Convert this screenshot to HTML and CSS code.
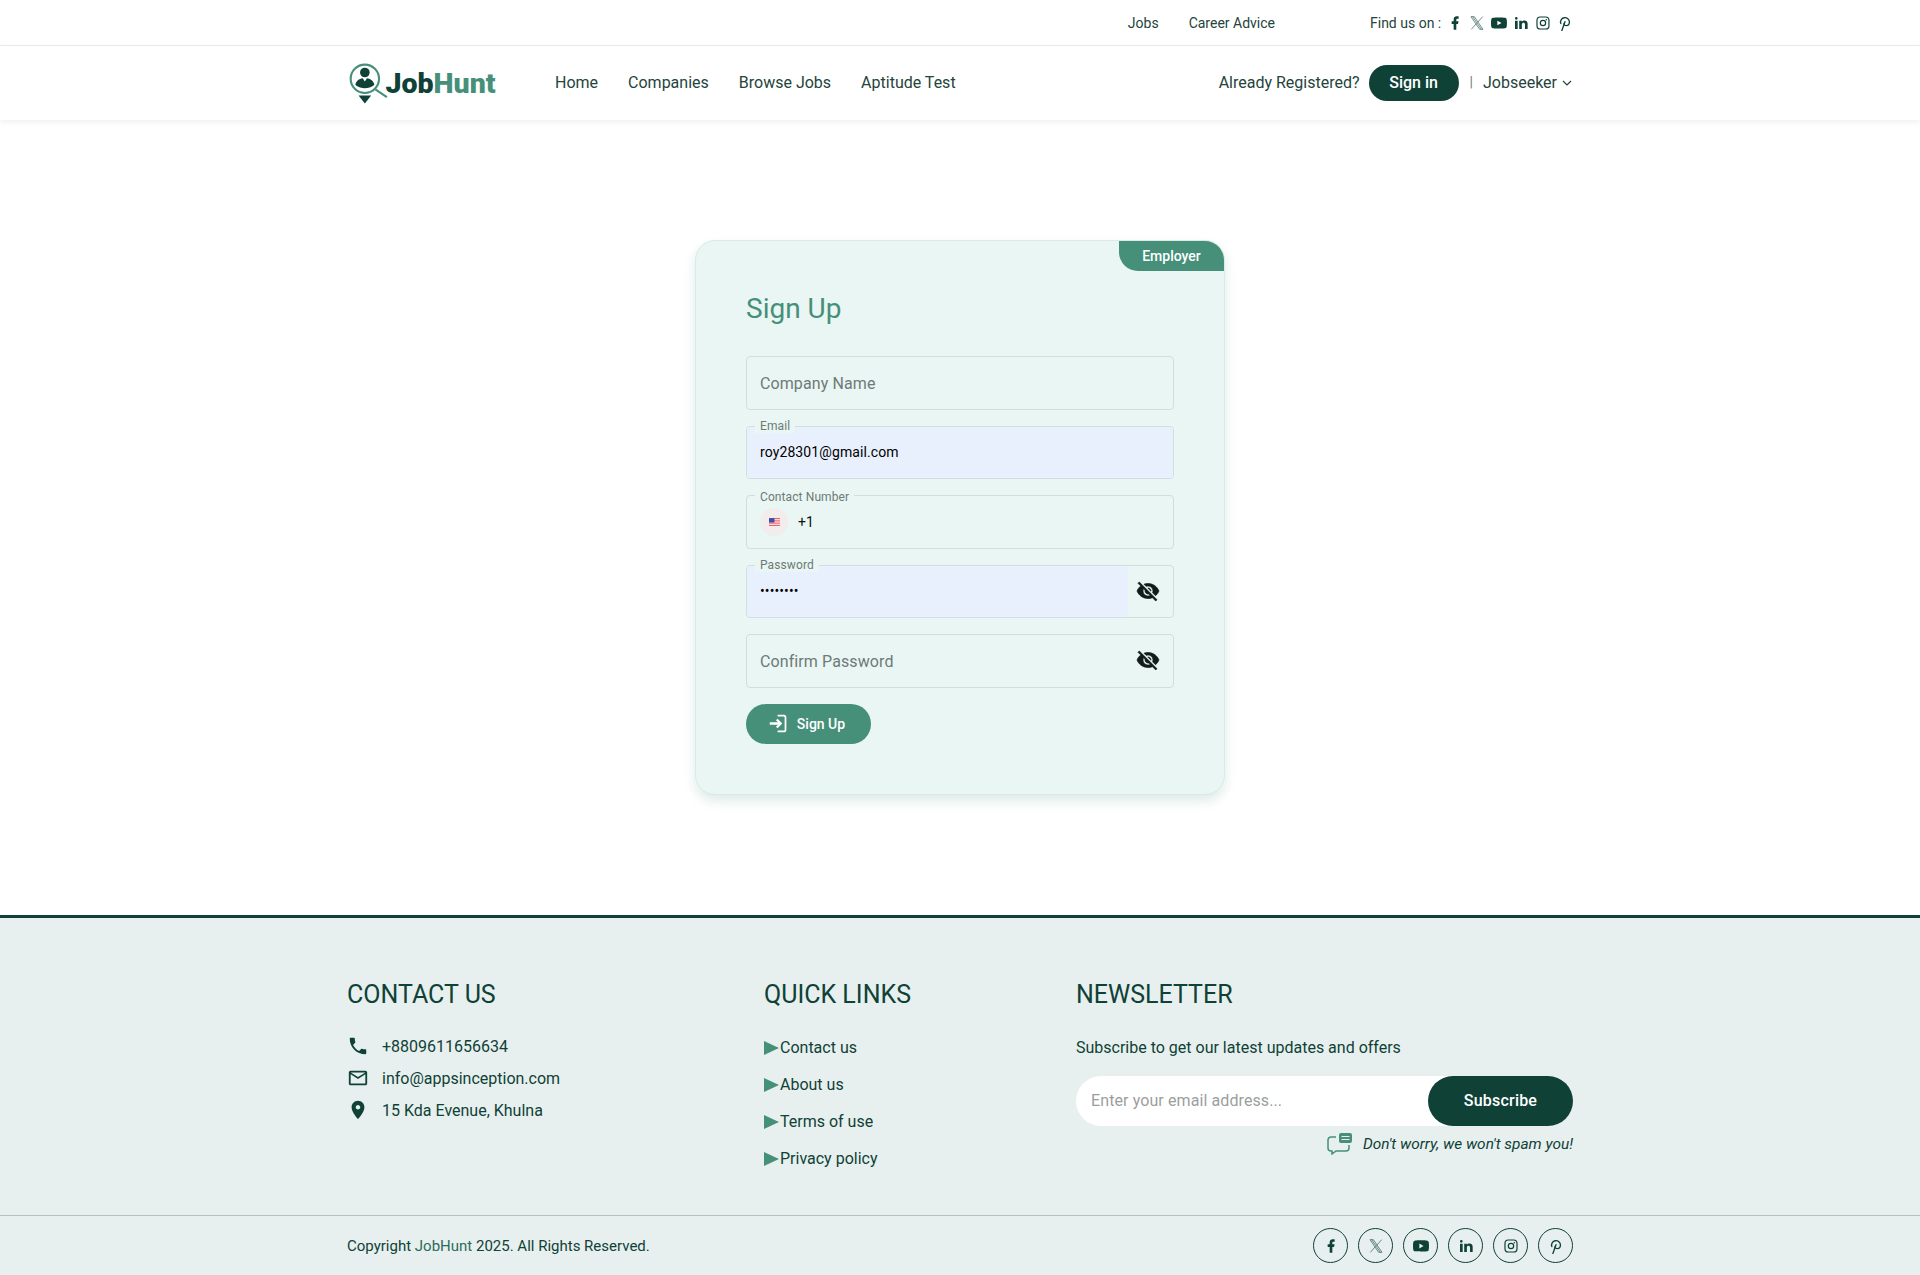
FILE: index.html
```html
<!DOCTYPE html>
<html lang="en">

<head>
    <meta charset="UTF-8">
    <title>JobHunt - Sign Up</title>
    <link rel="stylesheet" href="styles.css">
</head>

<body>
    <svg class="icon-defs" width="0" height="0">
        <symbol id="i-fb" viewBox="0 0 24 24"><path fill="currentColor" d="M14 13.5h2.5l1-4H14v-2c0-1.03 0-2 2-2h1.5V2.14c-.326-.043-1.557-.14-2.857-.14C11.928 2 10 3.657 10 6.7v2.8H7v4h3V22h4v-8.5z"/></symbol>
        <symbol id="i-x" viewBox="0 0 24 24"><g fill="none" stroke="currentColor" stroke-width="1.1"><path d="M3 2.500h5l13 19h-5z"/><path d="M5.500 2.500l13 19"/><path d="M20.500 2.500l-7.800 8.800M3.500 21.500l7.800-8.800"/></g></symbol>
        <symbol id="i-yt" viewBox="0 0 24 24"><path fill="currentColor" d="M23.498 6.186a3.016 3.016 0 0 0-2.122-2.136C19.505 3.545 12 3.545 12 3.545s-7.505 0-9.377.505A3.017 3.017 0 0 0 .502 6.186C0 8.07 0 12 0 12s0 3.93.502 5.814a3.016 3.016 0 0 0 2.122 2.136c1.871.505 9.376.505 9.376.505s7.505 0 9.377-.505a3.015 3.015 0 0 0 2.122-2.136C24 15.93 24 12 24 12s0-3.93-.502-5.814zM9.545 15.568V8.432L15.818 12l-6.273 3.568z"/></symbol>
        <symbol id="i-in" viewBox="0 0 24 24"><path fill="currentColor" d="M6.94 5a2 2 0 1 1-4-.002 2 2 0 0 1 4 .002zM7 8.48H3V21h4V8.48zm6.32 0H9.34V21h3.94v-6.57c0-3.66 4.77-4 4.77 0V21H22v-7.93c0-6.17-7.06-5.94-8.72-2.91l.04-1.68z"/></symbol>
        <symbol id="i-ig" viewBox="0 0 24 24"><g fill="none" stroke="currentColor" stroke-width="1.800"><rect x="3" y="3" width="18" height="18" rx="5"/><circle cx="12" cy="12" r="4"/></g><circle cx="17" cy="7" r="1.100" fill="currentColor"/></symbol>
        <symbol id="i-pin" viewBox="4.500 4 15 18"><g fill="none" stroke="currentColor" stroke-width="1.500" stroke-linecap="round" stroke-linejoin="round"><path d="M8.500 21.500l3.500-10"/><path d="M10.700 14c.437 1.263 1.430 2 2.550 2c2.071 0 3.750-1.554 3.750-4a5 5 0 1 0-9.700 1.700"/></g></symbol>
        <symbol id="i-eye-off" viewBox="0 0 24 24"><path fill="currentColor" stroke="currentColor" stroke-width=".7" d="M12 7c2.760 0 5 2.240 5 5 0 .65-.13 1.260-.36 1.830l2.920 2.920c1.510-1.260 2.700-2.890 3.430-4.750-1.730-4.390-6-7.500-11-7.500-1.400 0-2.740.25-3.980.7l2.160 2.160C10.740 7.130 11.350 7 12 7zM2 4.270l2.280 2.280.46.46C3.080 8.300 1.780 10.020 1 12c1.730 4.390 6 7.500 11 7.500 1.550 0 3.030-.3 4.380-.84l.42.42L19.730 22 21 20.730 3.270 3 2 4.270zM7.530 9.800l1.550 1.550c-.05.21-.08.43-.08.65 0 1.660 1.340 3 3 3 .22 0 .44-.03.65-.08l1.550 1.550c-.67.33-1.410.53-2.200.53-2.760 0-5-2.240-5-5 0-.79.2-1.530.53-2.200zm4.310-.78l3.150 3.150.02-.16c0-1.660-1.340-3-3-3l-.17.01z"/></symbol>
    </svg>

    <div class="top-bar">
        <div class="wrap top-bar-inner">
            <a href="#" class="top-link">Jobs</a>
            <a href="#" class="top-link">Career Advice</a>
            <div class="find-us">
                <span class="find-label">Find us on :</span>
                <svg class="find-icon"><use href="#i-fb"/></svg>
                <svg class="find-icon thin"><use href="#i-x"/></svg>
                <svg class="find-icon"><use href="#i-yt"/></svg>
                <svg class="find-icon"><use href="#i-in"/></svg>
                <svg class="find-icon"><use href="#i-ig"/></svg>
                <svg class="find-icon"><use href="#i-pin"/></svg>
            </div>
        </div>
    </div>

    <header class="nav-bar">
        <div class="wrap nav-inner">
            <a href="#" class="logo">
                <svg class="logo-mark" viewBox="0 0 40 40">
                    <circle cx="17" cy="16" r="13.500" fill="none" stroke="#46907a" stroke-width="2"/>
                    <path d="M27 26l11 7.500" stroke="#46907a" stroke-width="2"/>
                    <circle cx="17" cy="10" r="4.600" fill="#0f4137"/>
                    <path d="M8 22c.5-4 3.500-6 7-6.500l2 3 2-3c3.500.5 6.500 2.500 7 6.500-3 2.500-6 3-9 3s-6-.5-9-3z" fill="#0f4137"/>
                    <path d="M11 32h12l-6 7.500z" fill="#0f4137"/>
                </svg>
                <span class="logo-text">Job<span class="logo-accent">Hunt</span></span>
            </a>
            <nav class="main-nav">
                <a href="#">Home</a>
                <a href="#">Companies</a>
                <a href="#">Browse Jobs</a>
                <a href="#">Aptitude Test</a>
            </nav>
            <div class="nav-right">
                <span>Already Registered?</span>
                <a href="#" class="signin-btn">Sign in</a>
                <span class="nav-sep">|</span>
                <span>Jobseeker</span>
                <svg class="chevron" viewBox="0 0 12 12"><path d="M2 4l4 4 4-4" fill="none" stroke="currentColor" stroke-width="1.200"/></svg>
            </div>
        </div>
    </header>

    <main class="page-main">
        <div class="signup-card">
            <span class="role-tab">Employer</span>
            <h1 class="signup-title">Sign Up</h1>

            <div class="field">
                <input type="text" placeholder="Company Name">
            </div>
            <div class="field is-filled">
                <label>Email</label>
                <input type="text" class="autofilled" value="roy28301@gmail.com">
            </div>
            <div class="field is-filled">
                <label class="label-low">Contact Number</label>
                <div class="phone-row">
                    <span class="flag-wrap">
                        <svg class="flag" viewBox="0 0 10 7">
                            <rect width="10" height="7" fill="#e8505b"/>
                            <rect y="1" width="10" height="1" fill="#fff"/>
                            <rect y="3" width="10" height="1" fill="#fff"/>
                            <rect y="5" width="10" height="1" fill="#fff"/>
                            <rect width="5" height="4" fill="#3d4fa8"/>
                        </svg>
                    </span>
                    <span>+1</span>
                </div>
            </div>
            <div class="field is-filled">
                <label>Password</label>
                <input type="password" class="autofilled" value="password">
                <svg class="eye"><use href="#i-eye-off"/></svg>
            </div>
            <div class="field">
                <input type="password" placeholder="Confirm Password">
                <svg class="eye"><use href="#i-eye-off"/></svg>
            </div>

            <button class="signup-btn">
                <svg viewBox="0 0 24 24" width="21" height="21">
                    <g fill="none" stroke="currentColor">
                        <path stroke-width="2" d="M11 3h7a2 2 0 0 1 2 2v14a2 2 0 0 1-2 2h-7"/>
                        <path stroke-width="2.600" d="M2 12h11M10 7.500l4.500 4.500-4.500 4.500"/>
                    </g>
                </svg>
                Sign Up
            </button>
        </div>
    </main>

    <footer class="site-footer">
        <div class="wrap footer-grid">
            <section>
                <h3>CONTACT US</h3>
                <ul class="contact-list">
                    <li>
                        <svg viewBox="0 0 24 24"><path fill="currentColor" d="M6.620 10.790c1.440 2.830 3.760 5.140 6.590 6.590l2.200-2.200c.27-.27.67-.36 1.020-.24 1.120.37 2.330.57 3.570.57.55 0 1 .45 1 1V20c0 .55-.45 1-1 1-9.390 0-17-7.610-17-17 0-.55.45-1 1-1h3.500c.55 0 1 .45 1 1 0 1.250.2 2.450.57 3.570.11.35.03.74-.25 1.020l-2.200 2.200z"/></svg>
                        +8809611656634
                    </li>
                    <li>
                        <svg viewBox="0 0 24 24"><path fill="currentColor" d="M22 6c0-1.100-.9-2-2-2H4c-1.100 0-2 .9-2 2v12c0 1.100.9 2 2 2h16c1.100 0 2-.9 2-2V6zm-2 0l-8 5-8-5h16zm0 12H4V8l8 5 8-5v10z"/></svg>
                        info@appsinception.com
                    </li>
                    <li>
                        <svg viewBox="0 0 24 24"><path fill="currentColor" d="M12 2C8.130 2 5 5.130 5 9c0 5.250 7 13 7 13s7-7.750 7-13c0-3.870-3.130-7-7-7zm0 9.500c-1.380 0-2.500-1.120-2.500-2.500s1.120-2.500 2.500-2.500 2.500 1.120 2.500 2.500-1.120 2.500-2.500 2.500z"/></svg>
                        15 Kda Evenue, Khulna
                    </li>
                </ul>
            </section>
            <section>
                <h3>QUICK LINKS</h3>
                <ul class="quick-list">
                    <li><a href="#">Contact us</a></li>
                    <li><a href="#">About us</a></li>
                    <li><a href="#">Terms of use</a></li>
                    <li><a href="#">Privacy policy</a></li>
                </ul>
            </section>
            <section>
                <h3>NEWSLETTER</h3>
                <p class="news-text">Subscribe to get our latest updates and offers</p>
                <form class="news-form">
                    <input type="text" placeholder="Enter your email address...">
                    <button type="button">Subscribe</button>
                </form>
                <p class="news-note">
                    <svg viewBox="0 0 26 22" width="26" height="22">
                        <path d="M9 4H4a3 3 0 0 0-3 3v8a3 3 0 0 0 3 3h1v3l4-3h10a3 3 0 0 0 3-3v-3" fill="none" stroke="#46907a" stroke-width="1.500"/>
                        <rect x="12" y="0" width="13" height="10" rx="2" fill="#46907a"/>
                        <path d="M14.500 3.500h8M14.500 6.500h8" stroke="#e7f0ee" stroke-width="1.200"/>
                    </svg>
                    <em>Don't worry, we won't spam you!</em>
                </p>
            </section>
        </div>
        <div class="footer-bottom">
            <div class="wrap footer-bottom-inner">
                <span>Copyright <a href="#">JobHunt</a> 2025. All Rights Reserved.</span>
                <div class="social-row">
                    <a href="#"><svg><use href="#i-fb"/></svg></a>
                    <a href="#"><svg class="thin"><use href="#i-x"/></svg></a>
                    <a href="#"><svg><use href="#i-yt"/></svg></a>
                    <a href="#"><svg><use href="#i-in"/></svg></a>
                    <a href="#"><svg><use href="#i-ig"/></svg></a>
                    <a href="#"><svg><use href="#i-pin"/></svg></a>
                </div>
            </div>
        </div>
    </footer>
</body>

</html>
```

FILE: styles.css
```css
* {
    box-sizing: border-box;
}

body {
    font-family: Roboto, "Liberation Sans", sans-serif;
    background-color: #fff;
    color: #0f4137;
    margin: 0;
    font-size: 16px;
}

a {
    color: inherit;
    text-decoration: none;
}

.icon-defs {
    position: absolute;
}

.wrap {
    width: 1226px;
    margin: 0 auto;
}

/* top bar */
.top-bar {
    height: 46px;
    border-bottom: 1px solid #e9eeed;
    font-size: 14px;
    color: #24443c;
}

.top-bar-inner {
    height: 45px;
    display: flex;
    align-items: center;
    justify-content: flex-end;
}

.top-link {
    margin-right: 30px;
}

.find-us {
    display: flex;
    align-items: center;
    margin-left: 65px;
    width: 203px;
}

.find-label {
    white-space: nowrap;
}

.find-icon {
    width: 16px;
    height: 16px;
    color: #0f4137;
    margin-left: 6px;
}

.thin {
    opacity: 0.8;
}

/* nav */
.nav-bar {
    height: 74px;
    box-shadow: 0 2px 6px rgba(15, 65, 55, 0.08);
}

.nav-inner {
    height: 74px;
    display: flex;
    align-items: center;
}

.logo {
    display: flex;
    align-items: center;
    margin-left: 0;
    width: 208px;
}

.logo-mark {
    width: 42px;
    height: 42px;
    flex: none;
}

.logo-text {
    font-size: 28.500px;
    font-weight: 900;
    margin-left: -3.500px;
}

.logo-accent {
    color: #46907a;
}

.main-nav {
    display: flex;
    gap: 30px;
    color: #24443c;
    padding-bottom: 2px;
}

.nav-right {
    margin-left: auto;
    display: flex;
    align-items: center;
    color: #24443c;
}

.nav-right span {
    padding-bottom: 2px;
}

.signin-btn {
    background-color: #0f4137;
    color: #fff;
    font-weight: 500;
    height: 36px;
    width: 90px;
    border-radius: 18px;
    display: flex;
    align-items: center;
    justify-content: center;
    margin-left: 9px;
    padding-bottom: 2px;
}

.nav-sep {
    margin: 0 10px 0 11px;
    font-size: 14px;
    color: #6d8179;
}

.chevron {
    width: 12px;
    height: 12px;
    margin-left: 4px;
}

/* sign up card */
.page-main {
    padding: 120px 0;
}

.signup-card {
    position: relative;
    width: 530px;
    height: 555px;
    margin: 0 auto;
    padding: 50px;
    background-color: #e9f6f3;
    border: 1px solid #d9ebe6;
    border-radius: 20px;
    box-shadow: 0 6px 12px rgba(70, 144, 122, 0.18);
}

.role-tab {
    position: absolute;
    top: 0;
    right: 0;
    width: 105px;
    height: 30px;
    background-color: #46907a;
    color: #fff;
    font-size: 14px;
    font-weight: 500;
    display: flex;
    align-items: center;
    justify-content: center;
    border-radius: 0 19px 0 19px;
}

.signup-title {
    margin: 1px 0 30px;
    font-size: 28px;
    line-height: 34px;
    font-weight: 400;
    color: #46907a;
}

.field {
    position: relative;
    height: 53.5px;
    margin-bottom: 16px;
    border: 1px solid #d2dedb;
    border-radius: 4px;
    overflow: visible;
}

.field input {
    display: block;
    width: 100%;
    height: 100%;
    padding: 1px 13px 0;
    border: 0;
    outline: 0;
    background: transparent;
    font-family: inherit;
    font-size: 16px;
    letter-spacing: 0.1px;
    color: #000;
    border-radius: 3px;
}

.field input::placeholder {
    color: #6d7a77;
    opacity: 1;
}

.field.is-filled input {
    font-size: 14px;
    padding-top: 0;
}

.field input.autofilled {
    background-color: #e8f0fe;
}

.field input[type="password"] {
    width: calc(100% - 45px);
    border-radius: 3px 0 0 3px;
}

.field label {
    position: absolute;
    top: -8px;
    left: 8px;
    padding: 0 5px;
    font-size: 12px;
    line-height: 14px;
    letter-spacing: 0.1px;
    color: #6d7a77;
    background-color: #e9f6f3;
}

.field label.label-low {
    top: -6px;
}

.phone-row {
    height: 100%;
    padding-left: 13px;
    display: flex;
    align-items: center;
    font-size: 14px;
    color: #111;
}

.flag-wrap {
    width: 28px;
    height: 28px;
    border-radius: 50%;
    background-color: #f3ecec;
    display: flex;
    align-items: center;
    justify-content: center;
    margin-right: 10px;
}

.flag {
    width: 11px;
    height: 8px;
}

.eye {
    position: absolute;
    right: 13px;
    top: 13px;
    width: 24px;
    height: 24px;
    color: #111b18;
}

.signup-btn {
    width: 125px;
    height: 40px;
    border: 0;
    border-radius: 20px;
    background-color: #46907a;
    color: #fff;
    font-family: inherit;
    font-size: 14px;
    font-weight: 500;
    display: flex;
    align-items: center;
    justify-content: center;
    gap: 8px;
}

.signup-btn svg {
    margin-left: -4px;
}

/* footer */
.site-footer {
    height: 360px;
    background-color: #e7f0ee;
    border-top: 3px solid #0f4137;
}

.footer-grid {
    height: 297px;
    padding-top: 62px;
    display: grid;
    grid-template-columns: 417px 312px 1fr;
}

.footer-grid h3 {
    margin: 0 0 25.500px;
    font-size: 25px;
    line-height: 30px;
    font-weight: 400;
}

.footer-grid ul {
    list-style: none;
    margin: 0;
    padding: 0;
}

.footer-grid .contact-list {
    margin-top: -5.500px;
}

.contact-list li {
    display: flex;
    align-items: center;
    height: 32px;
    gap: 13px;
    margin-top: -2px;
    margin-bottom: 2px;
}

.contact-list svg {
    width: 22px;
    height: 22px;
}

.quick-list li {
    height: 37px;
    line-height: 24px;
}

.quick-list li::before {
    content: "";
    display: inline-block;
    border-left: 15px solid #46907a;
    border-top: 7px solid transparent;
    border-bottom: 7px solid transparent;
    vertical-align: -2px;
    margin-right: 1px;
}

.news-text {
    margin: 0 0 16px;
    line-height: 24px;
}

.news-form {
    display: flex;
    height: 50px;
    background-color: #fff;
    border-radius: 25px;
}

.news-form input {
    flex: 1;
    min-width: 0;
    padding: 0 15px;
    border: 0;
    outline: 0;
    background: transparent;
    font-family: inherit;
    font-size: 16px;
    letter-spacing: 0.1px;
}

.news-form input::placeholder {
    color: #9a9f9e;
    opacity: 1;
}

.news-form button {
    width: 145px;
    border: 0;
    border-radius: 25px;
    background-color: #0f4137;
    color: #fff;
    font-family: inherit;
    font-size: 16px;
    font-weight: 500;
    letter-spacing: 0.2px;
}

.news-note {
    margin: 7.500px 0 0;
    display: flex;
    align-items: center;
    justify-content: flex-end;
    gap: 10px;
    font-size: 15.400px;
}

.footer-bottom {
    height: 60px;
    border-top: 1px solid #b5c1be;
}

.footer-bottom-inner {
    height: 59px;
    display: flex;
    align-items: center;
    justify-content: space-between;
    font-size: 15px;
}

.footer-bottom-inner a {
    color: #2c6b5b;
}

.social-row {
    display: flex;
    gap: 10px;
}

.social-row a {
    width: 35px;
    height: 35px;
    border: 1px solid #0f4137;
    border-radius: 50%;
    display: flex;
    align-items: center;
    justify-content: center;
    color: #0f4137;
}

.social-row svg {
    width: 16px;
    height: 16px;
}
```
